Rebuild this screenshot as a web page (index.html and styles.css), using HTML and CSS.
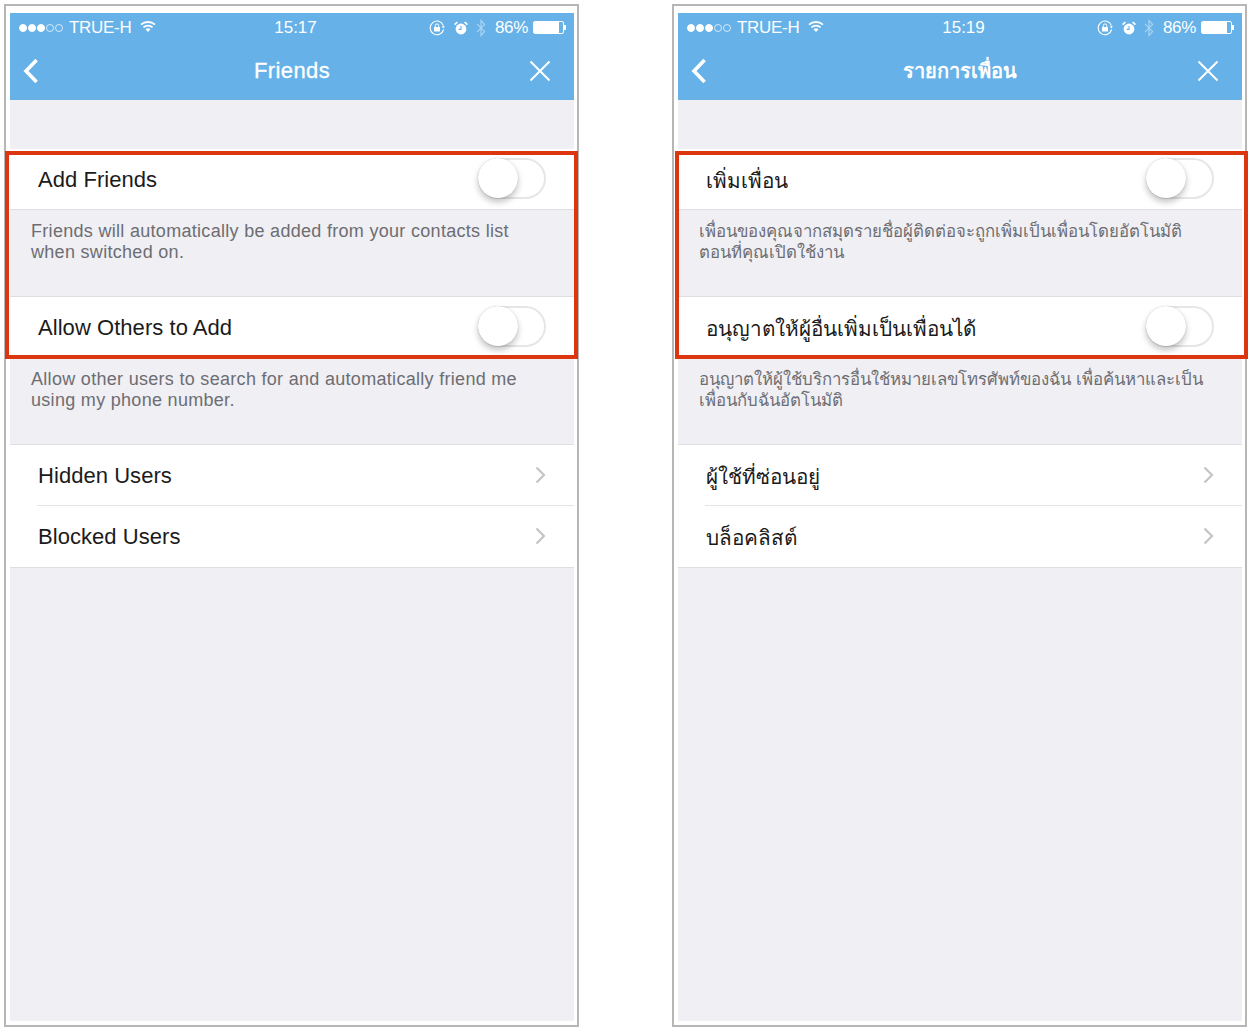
FILE: index.html
```html
<!DOCTYPE html>
<html lang="th">
<head>
  <meta charset="UTF-8" />
  <meta name="viewport" content="width=device-width, initial-scale=1" />
  <title>Friends</title>
  <link rel="stylesheet" href="styles.css">
</head>
<body>
  <svg class="defs" width="0" height="0">
    <symbol id="wifi" viewBox="0 0 16 12"><path d="M1 4.2C5 .6 11 .6 15 4.2M3.4 6.8C6 4.5 10 4.5 12.6 6.8" fill="none" stroke="#fff" stroke-width="1.8"/><path d="M5.5 8.7C7 7.5 9 7.5 10.5 8.7L8 11.6Z" fill="#fff"/></symbol>
    <symbol id="lock" viewBox="0 0 16 16"><path d="M14.6 9.5A6.8 6.8 0 1 1 14.4 5.6" fill="none" stroke="#fff" stroke-width="1.1"/><path d="M12.8 6.2h3l-1.5 2.2Z" fill="#fff"/><rect x="5" y="7" width="6" height="4.6" rx=".6" fill="#fff"/><path d="M6.3 7V5.6a1.7 1.7 0 0 1 3.4 0V7" fill="none" stroke="#fff" stroke-width="1"/></symbol>
    <symbol id="alarm" viewBox="0 0 14 14"><circle cx="7" cy="8" r="5.4" fill="#fff"/><path d="M7 5v3.4H4.6" fill="none" stroke="#66b1e8" stroke-width="1.1"/><path d="M.6 3.6 3.4 1M13.4 3.6 10.6 1" stroke="#fff" stroke-width="1.7"/></symbol>
    <symbol id="bluetooth" viewBox="0 0 10 18"><path d="M1 4.8 8.6 12.6 5 16.4V1.6L8.6 5.4 1 13.2" fill="none" stroke="#fff" stroke-width="1.2"/></symbol>
    <symbol id="back" viewBox="0 0 16 26"><path d="M13.6 2 3 13l10.6 11" fill="none" stroke="#fff" stroke-width="3.6"/></symbol>
    <symbol id="close" viewBox="0 0 22 22"><path d="M1.500 1.500l19 19M20.500 1.500l-19 19" fill="none" stroke="#fff" stroke-width="2"/></symbol>
    <symbol id="chevron" viewBox="0 0 11 18"><path d="M1.500 1.500 9 9l-7.500 7.500" fill="none" stroke="#c4c4c9" stroke-width="2.200"/></symbol>
  </svg>

  <div class="frame">
    <div class="phone">
      <header class="top">
        <div class="status">
          <div class="status-left">
            <span class="dots"><i></i><i></i><i></i><i class="off"></i><i class="off"></i></span>
            <span class="carrier">TRUE-H</span>
            <svg class="ic-wifi"><use href="#wifi"/></svg>
          </div>
          <div class="clock">15:17</div>
          <div class="status-right">
            <svg class="ic-lock"><use href="#lock"/></svg>
            <svg class="ic-alarm"><use href="#alarm"/></svg>
            <svg class="ic-bt"><use href="#bluetooth"/></svg>
            <span class="pct">86%</span>
            <span class="battery"><b></b></span>
          </div>
        </div>
        <nav class="nav">
          <svg class="ic-back"><use href="#back"/></svg>
          <h1>Friends</h1>
          <svg class="ic-close"><use href="#close"/></svg>
        </nav>
      </header>
      <main class="content">
        <div class="row first"><span>Add Friends</span><span class="toggle"></span></div>
        <p class="note">Friends will automatically be added from your contacts list<br>when switched on.</p>
        <div class="row"><span>Allow Others to Add</span><span class="toggle"></span></div>
        <p class="note">Allow other users to search for and automatically friend me<br>using my phone number.</p>
        <div class="group">
          <div class="row link"><span>Hidden Users</span><svg class="ic-chevron"><use href="#chevron"/></svg></div>
          <div class="row link"><span>Blocked Users</span><svg class="ic-chevron"><use href="#chevron"/></svg></div>
        </div>
      </main>
    </div>
    <div class="highlight"></div>
  </div>

  <div class="frame thai">
    <div class="phone">
      <header class="top">
        <div class="status">
          <div class="status-left">
            <span class="dots"><i></i><i></i><i></i><i class="off"></i><i class="off"></i></span>
            <span class="carrier">TRUE-H</span>
            <svg class="ic-wifi"><use href="#wifi"/></svg>
          </div>
          <div class="clock">15:19</div>
          <div class="status-right">
            <svg class="ic-lock"><use href="#lock"/></svg>
            <svg class="ic-alarm"><use href="#alarm"/></svg>
            <svg class="ic-bt"><use href="#bluetooth"/></svg>
            <span class="pct">86%</span>
            <span class="battery"><b></b></span>
          </div>
        </div>
        <nav class="nav">
          <svg class="ic-back"><use href="#back"/></svg>
          <h1>รายการเพื่อน</h1>
          <svg class="ic-close"><use href="#close"/></svg>
        </nav>
      </header>
      <main class="content">
        <div class="row first"><span>เพิ่มเพื่อน</span><span class="toggle"></span></div>
        <p class="note">เพื่อนของคุณจากสมุดรายชื่อผู้ติดต่อจะถูกเพิ่มเป็นเพื่อนโดยอัตโนมัติ<br>ตอนที่คุณเปิดใช้งาน</p>
        <div class="row"><span>อนุญาตให้ผู้อื่นเพิ่มเป็นเพื่อนได้</span><span class="toggle"></span></div>
        <p class="note">อนุญาตให้ผู้ใช้บริการอื่นใช้หมายเลขโทรศัพท์ของฉัน เพื่อค้นหาและเป็น<br>เพื่อนกับฉันอัตโนมัติ</p>
        <div class="group">
          <div class="row link"><span>ผู้ใช้ที่ซ่อนอยู่</span><svg class="ic-chevron"><use href="#chevron"/></svg></div>
          <div class="row link"><span>บล็อคลิสต์</span><svg class="ic-chevron"><use href="#chevron"/></svg></div>
        </div>
      </main>
    </div>
    <div class="highlight"></div>
  </div>
</body>
</html>
```

FILE: styles.css
```css
body {
  font-family: "Liberation Sans", "Noto Sans", "DejaVu Sans", sans-serif;
  background-color: white;
  display: flex;
  gap: 93px;
  margin: 0;
  padding: 4px 0 0 4px;
}

.defs {
  position: absolute;
}

.frame {
  position: relative;
  width: 575px;
  height: 1023px;
  box-sizing: border-box;
  border: 2px solid #b6b6b6;
  padding: 7px 3px 4px 4px;
}

.phone {
  height: 100%;
  display: flex;
  flex-direction: column;
  background-color: #efeff4;
}

.top {
  height: 87px;
  flex: none;
  box-sizing: border-box;
  background-color: #66b1e8;
  border-bottom: 1px solid #6bb0e0;
  color: white;
}

.status {
  display: grid;
  grid-template-columns: 1fr auto 1fr;
  align-items: center;
  height: 29px;
  padding: 0 8px 0 9px;
  font-size: 17px;
}

.status-left,
.status-right {
  display: flex;
  align-items: center;
}

.status-right {
  justify-content: flex-end;
}

.clock {
  margin-left: 6px;
}

.dots {
  display: flex;
  gap: 1px;
}

.dots i {
  width: 8px;
  height: 8px;
  box-sizing: border-box;
  border: 1px solid white;
  border-radius: 50%;
  background-color: white;
}

.dots i.off {
  background-color: transparent;
  opacity: 0.7;
}

.carrier {
  margin-left: 6px;
  letter-spacing: -0.3px;
}

.ic-wifi {
  width: 16px;
  height: 13px;
  margin: -3px 0 0 9px;
}

.ic-lock {
  width: 16px;
  height: 16px;
}

.ic-alarm {
  width: 14px;
  height: 14px;
  margin-left: 9px;
}

.ic-bt {
  width: 10px;
  height: 18px;
  margin-left: 8px;
  opacity: 0.45;
}

.pct {
  margin-left: 9px;
  letter-spacing: -0.3px;
}

.battery {
  display: block;
  width: 31px;
  height: 13px;
  margin-left: 5px;
  box-sizing: border-box;
  border: 1px solid white;
  border-radius: 2px;
  margin-right: 2px;
  position: relative;
}

.battery b {
  display: block;
  width: 86%;
  height: 100%;
  background-color: white;
}

.battery::after {
  content: "";
  position: absolute;
  right: -3px;
  top: 3px;
  width: 2px;
  height: 5px;
  background-color: white;
}

.nav {
  display: grid;
  grid-template-columns: 1fr auto 1fr;
  align-items: center;
  height: 57px;
  padding: 0 23px;
}

.nav h1 {
  margin: 0;
  font-size: 22px;
  font-weight: normal;
  letter-spacing: 0.4px;
  -webkit-text-stroke: 0.3px white;
}

.ic-back {
  width: 16px;
  height: 26px;
  margin-left: -10px;
}

.ic-close {
  width: 22px;
  height: 22px;
  justify-self: end;
}

.content {
  padding-top: 49px;
  flex: 1;
}

.row {
  display: flex;
  justify-content: space-between;
  align-items: center;
  height: 61px;
  box-sizing: border-box;
  padding: 2px 28px 0;
  background-color: white;
  border-top: 1px solid #dedee2;
  font-size: 22px;
  letter-spacing: 0.05px;
  color: #1b1b1b;
}

.row.first {
  border-top: none;
  height: 60px;
}

.toggle {
  position: relative;
  width: 68px;
  height: 41px;
  box-sizing: border-box;
  border: 2px solid #e6e6e6;
  border-radius: 21px;
  margin-top: -3px;
}

.toggle::before {
  content: "";
  position: absolute;
  left: -2px;
  top: -2px;
  width: 40px;
  height: 40px;
  border-radius: 50%;
  background-color: white;
  box-shadow: 0 4px 6px rgba(0,0,0,0.24), 0 0 1px rgba(0,0,0,0.25);
}

.note {
  margin: 0;
  height: 87px;
  box-sizing: border-box;
  padding: 11px 0 0 21px;
  font-size: 18px;
  line-height: 21px;
  letter-spacing: 0.3px;
  white-space: nowrap;
  color: #6d6d72;
  border-top: 1px solid #dedee2;
}

.group {
  border-bottom: 1px solid #dedee2;
}

.link + .link {
  border-top: none;
  position: relative;
  height: 62px;
}

.link + .link::before {
  content: "";
  position: absolute;
  left: 27px;
  right: 0;
  top: 0;
  height: 1px;
  background-color: #e4e4e8;
}

.ic-chevron {
  width: 11px;
  height: 18px;
  margin-top: -2px;
}

.highlight {
  position: absolute;
  left: -1px;
  top: 145px;
  width: 573px;
  height: 208px;
  box-sizing: border-box;
  border: 4px solid #dc3610;
}

.thai .highlight {
  left: 1px;
}

.thai .nav h1 {
  font-weight: bold;
  letter-spacing: 0;
  -webkit-text-stroke: 0;
  font-size: 20px;
}

.thai .row {
  font-size: 20.7px;
  letter-spacing: 0;
}

.thai .note {
  font-size: 16.8px;
  letter-spacing: 0;
}
```
